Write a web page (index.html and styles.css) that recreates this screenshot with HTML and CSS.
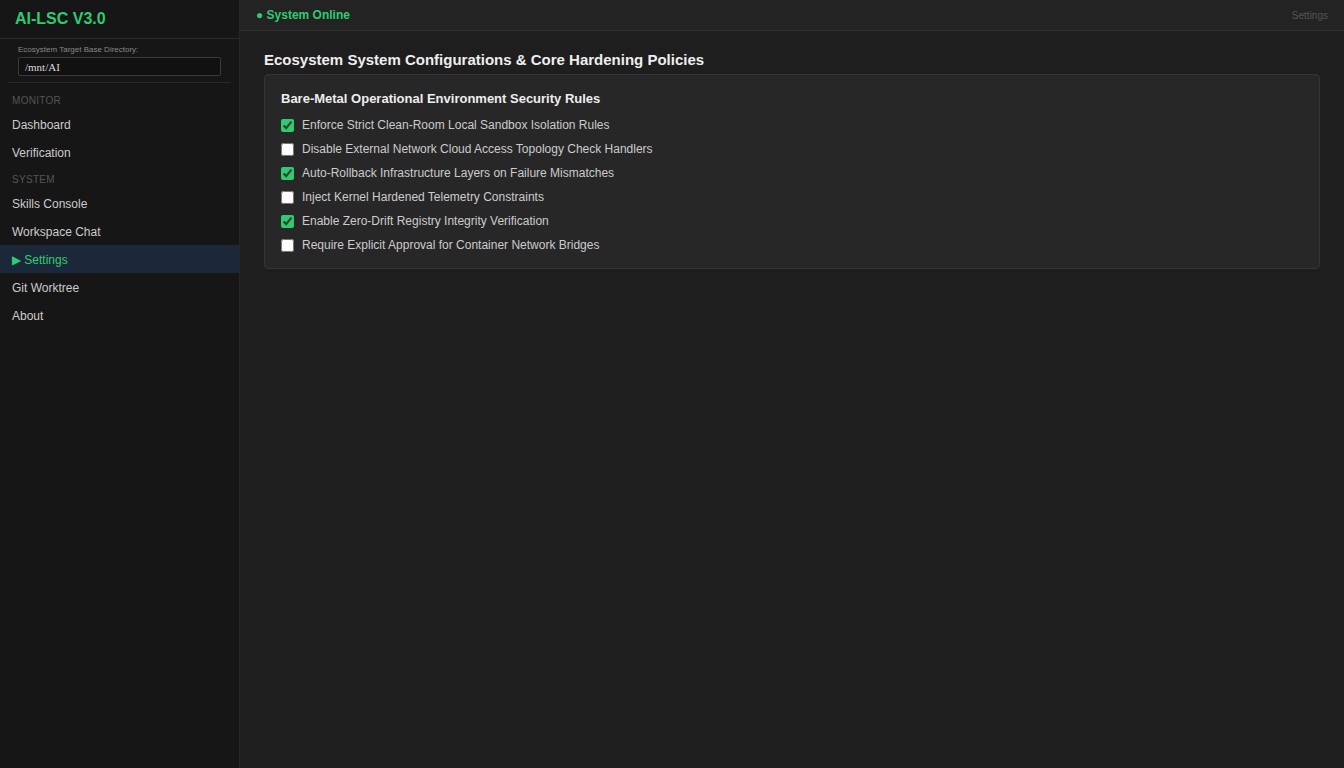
FILE: index.html
```html
<!DOCTYPE html>
<html lang="en">
<head>
    <meta charset="UTF-8">
    <meta name="viewport" content="width=device-width, initial-scale=1.0">
    <title>AI-LSC V3.0</title>
    <link rel="stylesheet" href="styles.css">
</head>
<body>
    <div class="app">
        <aside class="sidebar">
            <div class="brand">AI-LSC V3.0</div>
            <div class="dir-box">
                <label for="basedir">Ecosystem Target Base Directory:</label>
                <input type="text" id="basedir" value="/mnt/AI">
            </div>
            <div class="nav-section">Monitor</div>
            <a class="nav-item" href="#">Dashboard</a>
            <a class="nav-item" href="#">Verification</a>
            <div class="nav-section">System</div>
            <a class="nav-item" href="#">Skills Console</a>
            <a class="nav-item" href="#">Workspace Chat</a>
            <a class="nav-item active" href="#">&#9654; Settings</a>
            <a class="nav-item" href="#">Git Worktree</a>
            <a class="nav-item" href="#">About</a>
        </aside>

        <main class="main">
            <div class="topbar">
                <span class="status">&#9679; System Online</span>
                <span class="crumb">Settings</span>
            </div>
            <div class="content">
                <h2>Ecosystem System Configurations &amp; Core Hardening Policies</h2>
                <div class="card">
                    <h3>Bare-Metal Operational Environment Security Rules</h3>
                    <label class="rule"><input type="checkbox" checked> Enforce Strict Clean-Room Local Sandbox Isolation Rules</label>
                    <label class="rule"><input type="checkbox"> Disable External Network Cloud Access Topology Check Handlers</label>
                    <label class="rule"><input type="checkbox" checked> Auto-Rollback Infrastructure Layers on Failure Mismatches</label>
                    <label class="rule"><input type="checkbox"> Inject Kernel Hardened Telemetry Constraints</label>
                    <label class="rule"><input type="checkbox" checked> Enable Zero-Drift Registry Integrity Verification</label>
                    <label class="rule"><input type="checkbox"> Require Explicit Approval for Container Network Bridges</label>
                </div>
            </div>
        </main>
    </div>
</body>
</html>
```

FILE: styles.css
```css
body {
    margin: 0;
    background-color: #1e1e1e;
    font-family: "Liberation Sans", Arial, sans-serif;
    color: #cccccc;
}

.app {
    display: flex;
    height: 100vh;
}

.sidebar {
    width: 239px;
    background-color: #161616;
    border-right: 1px solid #262626;
    display: flex;
    flex-direction: column;
}

.brand {
    height: 39px;
    box-sizing: border-box;
    padding: 10px 15px 0;
    font-size: 16px;
    font-weight: bold;
    color: #2ecc71;
    border-bottom: 1px solid #2a2a2a;
}

.dir-box {
    margin: 0 8px 4px;
    padding: 6px 10px 6px;
    border-bottom: 1px solid #2a2a2a;
    display: flex;
    flex-direction: column;
}

.dir-box label {
    font-size: 8px;
    color: #888888;
    margin-bottom: 3px;
}

.dir-box input {
    height: 19px;
    box-sizing: border-box;
    background-color: #111111;
    border: 1px solid #3a3a3a;
    border-radius: 2px;
    color: #dddddd;
    font-family: "Liberation Serif", serif;
    font-size: 11px;
    padding: 0 6px;
    outline: none;
}

.nav-section {
    padding: 8px 12px 3px;
    line-height: 12px;
    font-size: 10px;
    letter-spacing: 0.3px;
    text-transform: uppercase;
    color: #555555;
}

.nav-item {
    display: block;
    height: 28px;
    box-sizing: border-box;
    padding: 2px 12px 0;
    line-height: 26px;
    font-size: 12px;
    color: #cccccc;
    text-decoration: none;
}

.nav-item.active {
    background-color: #1b2839;
    color: #2ecc71;
}

.main {
    flex: 1;
    display: flex;
    flex-direction: column;
}

.topbar {
    height: 30px;
    background-color: #232323;
    border-bottom: 1px solid #303030;
    display: flex;
    justify-content: space-between;
    align-items: center;
    padding: 0 16px;
}

.status {
    font-size: 12px;
    font-weight: bold;
    color: #2ecc71;
}

.crumb {
    font-size: 10px;
    color: #555555;
}

.content {
    padding: 20px 24px;
}

.content h2 {
    margin: 0 0 6px;
    font-size: 15px;
    color: #eeeeee;
}

.card {
    background-color: #272727;
    border: 1px solid #353535;
    border-radius: 4px;
    padding: 16px 16px 11px;
}

.card h3 {
    margin: 0 0 7px;
    font-size: 13px;
    color: #eeeeee;
}

.rule {
    display: flex;
    align-items: center;
    height: 24px;
    font-size: 12px;
    color: #cccccc;
}

.rule input {
    width: 13px;
    height: 13px;
    margin: 0 8px 0 0;
    accent-color: #2ecc71;
}
```
